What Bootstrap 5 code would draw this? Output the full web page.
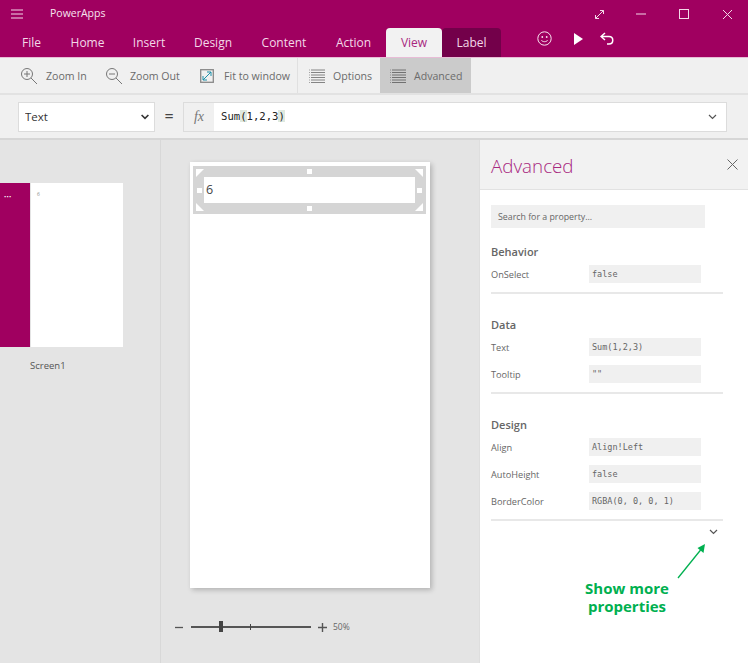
<!DOCTYPE html>
<html lang="en">

<head>
  <meta charset="UTF-8" />
  <title>PowerApps</title>
  <link href="https://cdn.jsdelivr.net/npm/bootstrap@5.3.3/dist/css/bootstrap.min.css" rel="stylesheet" />
  <style>
    html, body { height: 100%; overflow: hidden; }
    body { font-family: "Open Sans", "Liberation Sans", sans-serif; background: #e4e4e4; color: #666; }
    .app-header { background: #a00060; height: 58px; border-bottom: 1px solid #e8bcd6; color: #fff; }
    .title-row { height: 28px; }
    .hamburger { margin-left: 11px; width: 39px; }
    .app-name { font-size: 10.5px; color: #f7e3ef; }
    .win-btns { margin-right: 15px; gap: 33px; }
    .win-expand { margin-right: -2px; }
    .tab-row { height: 29px; }
    .tab-list { padding-left: 7px; }
    .tab-item { font-size: 12px; color: #f3d9e8; text-align: center; line-height: 29px; }
    .tab-item:nth-child(1) { width: 49px; }
    .tab-item:nth-child(2) { width: 63px; }
    .tab-item:nth-child(3) { width: 60px; }
    .tab-item:nth-child(4) { width: 68px; }
    .tab-item:nth-child(5) { width: 74px; }
    .tab-item:nth-child(6) { width: 65px; }
    .tab-item:nth-child(7) { width: 56px; background: #f2f2f2; color: #a8287f; border-radius: 4px 4px 0 0; }
    .tab-item:nth-child(8) { width: 59px; background: #73004a; border-radius: 4px 4px 0 0; }
    .tab-tools { margin-left: 36px; }
    .tab-tools svg { display: block; }
    .tool-play { margin: 0 1px 0 6px; }
    .tool-strip { background: #f0f0f0; height: 37px; border-bottom: 2px solid #e2e2e2; }
    .tool-btn { font-size: 10.6px; color: #6b6b6b; height: 35px; gap: 8px; white-space: nowrap; }
    .tool-btn span { padding-top: 2px; }
    .tool-btn:nth-child(1) { width: 95px; padding-left: 20px; }
    .tool-btn:nth-child(2) { width: 95px; padding-left: 10px; }
    .tool-btn:nth-child(3) { width: 108px; padding-left: 10px; border-right: 1px solid #e0e0e0; gap: 10px; }
    .tool-btn:nth-child(4) { width: 82px; padding-left: 11px; }
    .tool-btn:nth-child(5) { width: 91px; padding-left: 10px; background: #cbcbcb; }
    .formula-strip { background: #f0f0f0; height: 45px; border-bottom: 2px solid #d6d6d6; padding: 7px 21px 0 18px; }
    .prop-select { width: 137px; height: 30px; font-size: 11.5px; color: #333; border: 1px solid #dcdcdc; border-radius: 0; padding: 0 20px 0 6px; background-image: url("data:image/svg+xml,%3csvg xmlns='http://www.w3.org/2000/svg' viewBox='0 0 8 6'%3e%3cpath fill='none' stroke='%23333' stroke-width='1.6' d='M.6 1 4 4.4 7.4 1'/%3e%3c/svg%3e"); background-size: 8px 6px; background-position: right 5px center; font-family: inherit; box-shadow: none; }
    .eq-sign { width: 28px; text-align: center; font-size: 16px; color: #444; line-height: 28px; }
    .fx-box { width: 31px; height: 30px; background: #f0f0f0; border: 1px solid #dcdcdc; border-right: 0; font-family: "Liberation Serif", serif; font-style: italic; font-size: 14px; color: #777; text-align: center; line-height: 27px; }
    .formula-box { height: 30px; background: #fff; border: 1px solid #dcdcdc; border-left: 0; padding: 0 9px 0 7px; font-family: "DejaVu Sans Mono", monospace; font-size: 10.6px; color: #222; }
    .brace-hl { background: #dfe9df; }
    .main-area { min-height: 0; }
    .screens-col { width: 161px; border-right: 1px solid #d8d8d8; padding-top: 43px; }
    .thumb-wrap { height: 164px; width: 123px; }
    .thumb-side { width: 31px; background: #a00060; border-right: 1px solid #e4e4e4; color: #fff; font-size: 6px; line-height: 1; padding: 11px 0 0 4px; letter-spacing: .3px; }
    .thumb-page { background: #fff; font-size: 5px; color: #888; padding: 8px 0 0 6px; }
    .thumb-name { font-size: 9.5px; color: #555; margin: 12px 0 0 30px; }
    .canvas-col { width: 318px; padding: 22px 0 0 29px; }
    .page-sheet { width: 240px; height: 426px; background: #fff; box-shadow: 2px 2px 5px rgba(0, 0, 0, .22); padding: 4px 4px 0 3px; }
    .sel-box { position: relative; height: 48px; background: #d5d5d5; padding: 11px 11px; }
    .sel-inner { height: 26px; background: #fff; font-size: 12.5px; color: #444; line-height: 26px; padding-left: 2px; }
    .handle { position: absolute; width: 5px; height: 5px; background: #fff; }
    .h-top { top: 3px; left: 114px; }
    .h-bottom { bottom: 3px; left: 114px; }
    .h-left { top: 22px; left: 4px; }
    .h-right { top: 22px; right: 4px; }
    .corner { position: absolute; width: 8px; height: 8px; background: #fff; }
    .c-tl { top: 3px; left: 3px; clip-path: polygon(0 0, 100% 0, 0 100%); }
    .c-tr { top: 3px; right: 3px; clip-path: polygon(0 0, 100% 0, 100% 100%); }
    .c-bl { bottom: 3px; left: 3px; clip-path: polygon(0 0, 100% 100%, 0 100%); }
    .c-br { bottom: 3px; right: 3px; clip-path: polygon(100% 0, 100% 100%, 0 100%); }
    .zoom-row { margin: 34px 0 0 -15px; height: 10px; }
    .zoom-track { position: relative; width: 120px; height: 1.5px; background: #555; margin: 0 7px 0 8px; }
    .zoom-thumb { position: absolute; left: 28px; top: -5px; width: 4px; height: 11px; background: #444; }
    .zoom-tick { position: absolute; left: 59px; top: -2px; width: 1px; height: 6px; background: #444; }
    .zoom-pct { font-size: 8.5px; color: #666; margin-left: 6px; }
    .side-panel { width: 269px; background: #fff; border-left: 1px solid #dedede; position: relative; }
    .panel-head { height: 50px; background: #f2f2f2; border-bottom: 1px solid #e2e2e2; padding: 0 10px 0 11px; }
    .panel-title { font-size: 18.8px; color: #a8287f; font-weight: 300; margin: 0; padding-top: 3px; }
    .panel-body-wrap { padding: 15px 0 0 11px; }
    .search-box { width: 214px; height: 23px; background: #f0f0f0; font-size: 8.8px; color: #666; line-height: 25px; padding: 0 7px; }
    .sect-name { font-size: 11px; font-weight: 600; color: #666; height: 16px; line-height: 16px; margin-bottom: 5px; }
    .prop-row { height: 18px; font-size: 9.2px; color: #666; margin-bottom: 9px; }
    .prop-label { width: 98px; padding-top: 3px; }
    .prop-val { width: 112px; height: 18px; background: #f0f0f0; font-family: "DejaVu Sans Mono", monospace; font-size: 8.5px; color: #666; line-height: 18px; padding-left: 3px; }
    .sect-end { width: 232px; height: 2px; background: #e8e8e8; opacity: 1; border: 0; margin: 0 0 23px; }
    .sect-last { margin-bottom: 0; }
    .more-link { width: 232px; height: 22px; text-align: right; padding-right: 5px; }
    .arrow-note { position: absolute; left: 197px; top: 403px; }
    .more-note { position: absolute; left: 88px; top: 440px; width: 118px; text-align: center; color: #00b050; font-weight: 700; font-size: 15px; line-height: 17.5px; }
  </style>
</head>

<body class="d-flex flex-column">

  <header class="app-header flex-shrink-0">
    <div class="title-row d-flex align-items-center">
      <div class="hamburger">
        <svg width="13" height="10" viewBox="0 0 13 10" class="d-block"><path d="M0 1h12M0 5h12M0 9h12" stroke="#f3d9e8" fill="none" /></svg>
      </div>
      <div class="app-name flex-grow-1">PowerApps</div>
      <div class="win-btns d-flex align-items-center">
        <svg class="win-expand" width="11" height="11" viewBox="0 0 11 11"><path d="M1.5 9.5 9.5 1.5M6 1.5H9.5V5M1.5 6V9.5H5" stroke="#f3d9e8" fill="none" /></svg>
        <svg width="10" height="12" viewBox="0 0 10 12"><path d="M0 6h10" stroke="#f3d9e8" fill="none" /></svg>
        <svg width="10" height="10" viewBox="0 0 10 10"><rect x=".5" y=".5" width="9" height="9" stroke="#f3d9e8" fill="none" /></svg>
        <svg width="11" height="11" viewBox="0 0 11 11"><path d="M1 1 10 10M10 1 1 10" stroke="#f3d9e8" fill="none" /></svg>
      </div>
    </div>
    <div class="tab-row d-flex">
      <nav class="tab-list d-flex">
        <div class="tab-item">File</div>
        <div class="tab-item">Home</div>
        <div class="tab-item">Insert</div>
        <div class="tab-item">Design</div>
        <div class="tab-item">Content</div>
        <div class="tab-item">Action</div>
        <div class="tab-item">View</div>
        <div class="tab-item">Label</div>
      </nav>
      <div class="tab-tools d-flex align-items-center gap-3 pb-2">
        <svg width="15" height="15" viewBox="0 0 15 15"><circle cx="7.5" cy="7.5" r="6.7" stroke="#f7e3ef" fill="none" /><circle cx="5.3" cy="6" r=".9" fill="#f7e3ef" /><circle cx="9.7" cy="6" r=".9" fill="#f7e3ef" /><path d="M4.3 9.2c1.5 2 4.9 2 6.4 0" stroke="#f7e3ef" fill="none" /></svg>
        <svg width="9" height="12" viewBox="0 0 9 12" class="tool-play"><path d="M0 0 9 6 0 12Z" fill="#fff" /></svg>
        <svg width="14" height="13" viewBox="0 0 14 13"><path d="M5 1 1 4.5 5 8M1.3 4.5H9c5 0 5 7.5 0 7.5H7" stroke="#fff" stroke-width="1.5" fill="none" /></svg>
      </div>
    </div>
  </header>

  <div class="tool-strip d-flex flex-shrink-0">
    <div class="tool-btn d-flex align-items-center">
      <svg width="18" height="18" viewBox="0 0 18 18"><circle cx="7" cy="7" r="5.5" stroke="#777" fill="none" /><path d="M7 4v6M4 7h6M11 11l6 6" stroke="#777" fill="none" /></svg>
      <span>Zoom In</span>
    </div>
    <div class="tool-btn d-flex align-items-center">
      <svg width="17" height="18" viewBox="0 0 17 18"><circle cx="7" cy="7" r="5.5" stroke="#777" fill="none" /><path d="M4 7h6M11 11l6 6" stroke="#777" fill="none" /></svg>
      <span>Zoom Out</span>
    </div>
    <div class="tool-btn d-flex align-items-center">
      <svg width="14" height="14" viewBox="0 0 14 14"><rect x=".7" y=".7" width="12.6" height="12.6" stroke="#888" stroke-width="1.3" fill="none" /><path d="M3 11 11 3M7 3h4v4M3 7v4h4" stroke="#1e8fa8" fill="none" /></svg>
      <span>Fit to window</span>
    </div>
    <div class="tool-btn d-flex align-items-center">
      <svg width="16" height="14" viewBox="0 0 16 14"><path d="M2 1h14M2 3.5h14M2 6h14M2 8.5h14M2 11h14M2 13.5h14" stroke="#777" stroke-width=".9" fill="none" /><path d="M0 1h1M0 3.5h1M0 6h1M0 8.5h1M0 11h1M0 13.5h1" stroke="#999" stroke-width=".9" fill="none" /></svg>
      <span>Options</span>
    </div>
    <div class="tool-btn d-flex align-items-center">
      <svg width="16" height="14" viewBox="0 0 16 14"><path d="M2 1h14M2 3.5h14M2 6h14M2 8.5h14M2 11h14M2 13.5h14" stroke="#666" stroke-width=".9" fill="none" /><path d="M0 1h1M0 3.5h1M0 6h1M0 8.5h1M0 11h1M0 13.5h1" stroke="#888" stroke-width=".9" fill="none" /></svg>
      <span>Advanced</span>
    </div>
  </div>

  <div class="formula-strip d-flex flex-shrink-0">
    <select class="form-select prop-select">
      <option>Text</option>
    </select>
    <div class="eq-sign">=</div>
    <div class="fx-box">fx</div>
    <div class="formula-box d-flex align-items-center flex-grow-1">
      <span class="flex-grow-1">Sum<span class="brace-hl">(</span>1,2,3<span class="brace-hl">)</span></span>
      <svg width="9" height="6" viewBox="0 0 9 6"><path d="M1 1 4.5 4.5 8 1" stroke="#555" stroke-width="1.2" fill="none" /></svg>
    </div>
  </div>

  <main class="main-area d-flex flex-grow-1">
    <div class="screens-col flex-shrink-0">
      <div class="thumb-wrap d-flex">
        <div class="thumb-side">•••</div>
        <div class="thumb-page flex-grow-1">6</div>
      </div>
      <div class="thumb-name">Screen1</div>
    </div>

    <div class="canvas-col flex-shrink-0">
      <div class="page-sheet">
        <div class="sel-box">
          <div class="sel-inner">6</div>
          <span class="corner c-tl"></span><span class="corner c-tr"></span>
          <span class="corner c-bl"></span><span class="corner c-br"></span>
          <span class="handle h-top"></span><span class="handle h-bottom"></span>
          <span class="handle h-left"></span><span class="handle h-right"></span>
        </div>
      </div>
      <div class="zoom-row d-flex align-items-center">
        <svg width="8" height="9" viewBox="0 0 8 9"><path d="M0 4.5h8" stroke="#555" stroke-width="1.3" fill="none" /></svg>
        <div class="zoom-track"><span class="zoom-thumb"></span><span class="zoom-tick"></span></div>
        <svg width="9" height="9" viewBox="0 0 9 9"><path d="M0 4.5h9M4.5 0v9" stroke="#555" stroke-width="1.4" fill="none" /></svg>
        <span class="zoom-pct">50%</span>
      </div>
    </div>

    <aside class="side-panel flex-grow-1">
      <div class="panel-head d-flex align-items-center justify-content-between">
        <h2 class="panel-title">Advanced</h2>
        <svg width="11" height="11" viewBox="0 0 11 11"><path d="M.5.5l10 10M10.5.5l-10 10" stroke="#666" fill="none" /></svg>
      </div>
      <div class="panel-body-wrap">
        <div class="search-box mb-3">Search for a property...</div>

        <div class="sect-name">Behavior</div>
        <div class="prop-row d-flex"><div class="prop-label">OnSelect</div><div class="prop-val">false</div></div>
        <hr class="sect-end" />

        <div class="sect-name">Data</div>
        <div class="prop-row d-flex"><div class="prop-label">Text</div><div class="prop-val">Sum(1,2,3)</div></div>
        <div class="prop-row d-flex"><div class="prop-label">Tooltip</div><div class="prop-val">""</div></div>
        <hr class="sect-end" />

        <div class="sect-name">Design</div>
        <div class="prop-row d-flex"><div class="prop-label">Align</div><div class="prop-val">Align!Left</div></div>
        <div class="prop-row d-flex"><div class="prop-label">AutoHeight</div><div class="prop-val">false</div></div>
        <div class="prop-row d-flex"><div class="prop-label">BorderColor</div><div class="prop-val">RGBA(0, 0, 0, 1)</div></div>
        <hr class="sect-end sect-last" />
        <div class="more-link pt-2">
          <svg width="9" height="6" viewBox="0 0 9 6" class="d-inline-block align-top"><path d="M1 1 4.5 4.5 8 1" stroke="#555" stroke-width="1.2" fill="none" /></svg>
        </div>
      </div>
      <svg class="arrow-note" width="30" height="36" viewBox="0 0 30 36"><path d="M1 35 26 4" stroke="#00b050" stroke-width="1.3" fill="none" /><path d="M28 1 26.5 10 20.5 5Z" fill="#00b050" /></svg>
      <div class="more-note">Show more properties</div>
    </aside>
  </main>

</body>

</html>
